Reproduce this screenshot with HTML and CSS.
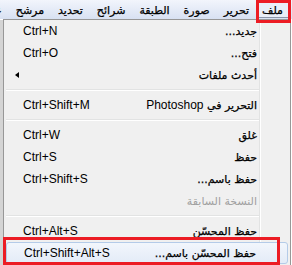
FILE: index.html
```html
<!DOCTYPE html>
<html lang="ar">
<head>
<meta charset="utf-8">
<link rel="stylesheet" href="styles.css">
</head>
<body>
<div class="screen">
  <div class="menubar">
    <span class="mb-item pressed">ملف</span>
    <span class="mb-item">تحرير</span>
    <span class="mb-item">صورة</span>
    <span class="mb-item">الطبقة</span>
    <span class="mb-item">شرائح</span>
    <span class="mb-item">تحديد</span>
    <span class="mb-item">مرشح</span>
    <span class="mb-item">عرض</span>
  </div>
  <div class="body">
    <div class="frame-strip"></div>
    <div class="menu">
      <div class="item"><span class="label">جديد...</span><span class="key">Ctrl+N</span></div>
      <div class="item"><span class="label">فتح...</span><span class="key">Ctrl+O</span></div>
      <div class="item"><span class="label">أحدث ملفات</span><span class="key"><span class="arrow"></span></span></div>
      <div class="sep"></div>
      <div class="item"><span class="label">التحرير في <span class="latin">Photoshop</span></span><span class="key">Ctrl+Shift+M</span></div>
      <div class="sep"></div>
      <div class="item"><span class="label">غلق</span><span class="key">Ctrl+W</span></div>
      <div class="item"><span class="label">حفظ</span><span class="key">Ctrl+S</span></div>
      <div class="item"><span class="label">حفظ باسم...</span><span class="key">Ctrl+Shift+S</span></div>
      <div class="item disabled"><span class="label">النسخة السابقة</span><span class="key"></span></div>
      <div class="sep"></div>
      <div class="item"><span class="label">حفظ المحسّن</span><span class="key">Ctrl+Alt+S</span></div>
      <div class="item hover"><span class="label">حفظ المحسّن باسم...</span><span class="key">Ctrl+Shift+Alt+S</span></div>
    </div>
  </div>
  <div class="mark mark-top"></div>
  <div class="mark mark-bottom"></div>
</div>
</body>
</html>
```
FILE: styles.css
```css
html, body {
  margin: 0;
  padding: 0;
  background: #ffffff;
}
.screen {
  position: relative;
  width: 292px;
  height: 265px;
  overflow: hidden;
}
.menubar {
  height: 19px;
  display: flex;
  direction: rtl;
  align-items: center;
  padding-right: 3px;
  background: linear-gradient(#f2f5fc, #d8e1f2);
  white-space: nowrap;
  font-family: "DejaVu Sans", sans-serif;
  font-size: 11px;
  color: #000;
  -webkit-text-stroke: 0.25px #000;
}
.mb-item {
  padding: 0 6px;
  height: 17px;
  line-height: 17px;
  border: 1px solid transparent;
  box-sizing: border-box;
}
.mb-item.pressed {
  padding: 0 5px;
  border-color: #8c96a8;
  background: #e9eef7;
}
.body {
  display: flex;
  height: 246px;
}
.frame-strip {
  width: 3px;
  background: #d4d4d4;
  border-top: 1px solid #ffffff;
}
.menu {
  width: 286px;
  border: 1px solid #979797;
  border-bottom: none;
  background:
    linear-gradient(to left, transparent 29px, #ffffff 29px, #ffffff 30px, #e2e3e3 30px, #e2e3e3 31px, transparent 31px),
    #f0f0f0;
  font-family: "Liberation Sans", sans-serif;
  font-size: 12px;
}
.item {
  height: 22px;
  display: flex;
  align-items: center;
  justify-content: space-between;
  box-sizing: border-box;
}
.label {
  direction: rtl;
  order: 2;
  padding-right: 33px;
  font-family: "DejaVu Sans", sans-serif;
  font-size: 11px;
  color: #000;
  -webkit-text-stroke: 0.25px currentColor;
}
.latin {
  font-family: "Liberation Sans", sans-serif;
  font-size: 12px;
  -webkit-text-stroke: 0;
}
.key {
  order: 1;
  padding-left: 19px;
  color: #000;
  display: flex;
  align-items: center;
}
.arrow {
  width: 0;
  height: 0;
  margin-left: -8px;
  border-top: 3.5px solid transparent;
  border-bottom: 3.5px solid transparent;
  border-right: 4px solid #000;
}
.disabled .label {
  color: #a0a0a0;
  -webkit-text-stroke: 0;
}
.sep {
  height: 8px;
  margin-left: 2px;
  margin-right: 31px;
  background: linear-gradient(transparent 3px, #e2e3e3 3px, #e2e3e3 4px, #ffffff 4px, #ffffff 5px, transparent 5px);
}
.item.hover {
  margin: 0 2px;
  border: 1px solid #b4cbe8;
  border-radius: 3px;
  background: linear-gradient(#f2f6fc, #e3ebf7);
}
.item.hover .label { padding-right: 31px; }
.item.hover .key { padding-left: 17px; }
.mark {
  position: absolute;
  border: 3px solid #ec1c24;
  box-sizing: border-box;
}
.mark-top {
  left: 256px;
  top: 0;
  width: 35px;
  height: 23px;
}
.mark-bottom {
  left: 3px;
  top: 237px;
  width: 277px;
  height: 28px;
}
```
